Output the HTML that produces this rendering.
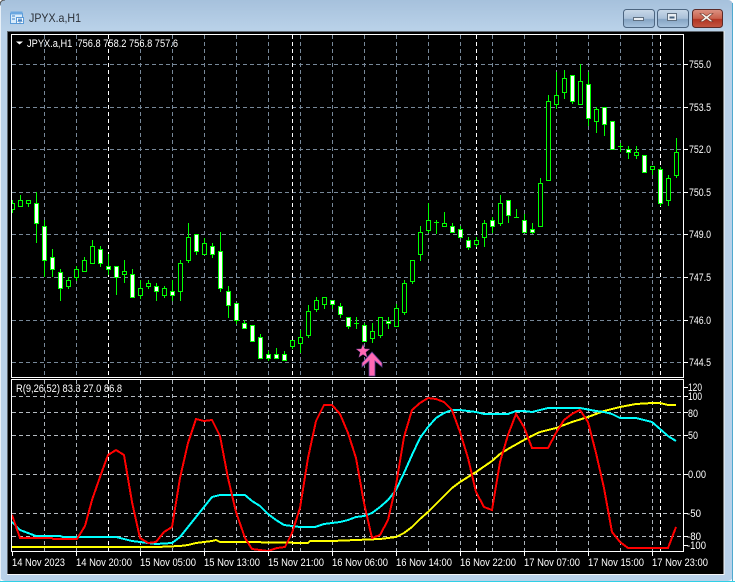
<!DOCTYPE html>
<html><head><meta charset="utf-8"><title>JPYX.a,H1</title>
<style>
html,body{margin:0;padding:0;background:#fff}
body{width:735px;height:582px;overflow:hidden}
svg{display:block}
text{font-family:"Liberation Sans",sans-serif;font-size:11px;fill:#fff}
</style></head><body>
<svg width="735" height="582" viewBox="0 0 735 582" xmlns="http://www.w3.org/2000/svg">
<defs>
<linearGradient id="tb" x1="0" y1="0" x2="0" y2="1"><stop offset="0" stop-color="#a6c1dc"/><stop offset="1" stop-color="#bad2e9"/></linearGradient>
<linearGradient id="bt" x1="0" y1="0" x2="0" y2="1"><stop offset="0" stop-color="#c9d9e9"/><stop offset=".5" stop-color="#a9c0d8"/><stop offset=".55" stop-color="#86a5c4"/><stop offset="1" stop-color="#a8c4de"/></linearGradient>
<linearGradient id="cl" x1="0" y1="0" x2="0" y2="1"><stop offset="0" stop-color="#dc9484"/><stop offset=".5" stop-color="#c9604c"/><stop offset=".55" stop-color="#b23422"/><stop offset="1" stop-color="#c25642"/></linearGradient>
<clipPath id="mc"><rect x="12" y="35" width="671" height="342"/></clipPath>
<clipPath id="ic"><rect x="12" y="380" width="671" height="171"/></clipPath>
</defs>
<rect width="733" height="581" rx="5" fill="#b9d1e9"/>
<rect width="733" height="31" rx="5" fill="url(#tb)"/>
<path d="M0 5Q0 0 5 0" fill="none" stroke="#555" stroke-width="1"/>
<rect x="0" y="581" width="735" height="1" fill="#2fd0e6"/>
<rect x="732" y="3" width="1" height="578" fill="#4fa9cf"/>
<rect x="0" y="6" width="1" height="575" fill="#e8f0f8"/>

<g>
<rect x="10.5" y="13.5" width="12" height="10" fill="#d9ecfb" stroke="#5b9bd8"/>
<rect x="10.5" y="11.5" width="12" height="3" fill="#6aa7e0"/>
<rect x="16.5" y="17.5" width="7" height="6" fill="#fff" stroke="#5b9bd8"/>
<path d="M12 16h3M12 19h3M18 22l1-3 1 3 1-3 1 3" stroke="#3d7fc4" fill="none"/>
</g>
<text x="29" y="22" style="font-size:12px;fill:#2a2f36" textLength="52" lengthAdjust="spacingAndGlyphs">JPYX.a,H1</text>

<rect x="623.5" y="9.5" width="31" height="18" rx="3" fill="url(#bt)" stroke="#4c6580"/>
<rect x="657.5" y="9.5" width="31" height="18" rx="3" fill="url(#bt)" stroke="#4c6580"/>
<rect x="692.5" y="9.5" width="30" height="18" rx="3" fill="url(#cl)" stroke="#5a2a28"/>
<rect x="633.5" y="17.5" width="10" height="3" fill="#e9eef3" stroke="#5f6f80"/>
<rect x="667.5" y="13.5" width="9" height="7" fill="#e9eef3" stroke="#5f6f80"/>
<rect x="669.5" y="16.5" width="5" height="2" fill="#44607c"/>
<path d="M703 13.5l3.5 2.5 3.500-2.500h3l-4.500 4 4.500 4h-3l-3.500-2.500-3.500 2.500h-3l4.500-4-4.500-4z" fill="#f4efe9" stroke="#6e3a30" stroke-width=".6"/>

<rect x="7" y="31" width="717" height="543" fill="#000"/>
<path d="M7.500 574V31.500H724" fill="none" stroke="#5e666e"/>
<path d="M7 574.500H724V31" fill="none" stroke="#f4f6f8"/>

<g shape-rendering="crispEdges" fill="none">
<g clip-path="url(#mc)">
<path stroke="#778899" stroke-dasharray="4 3" d="M12 64.500H683M12 107.500H683M12 149.500H683M12 192.500H683M12 234.500H683M12 277.500H683M12 320.500H683M12 362.500H683"/>
<path stroke="#778899" stroke-dasharray="4 3" d="M44.500 35V377M76.500 35V377M140.500 35V377M172.500 35V377M204.500 35V377M236.500 35V377M268.500 35V377M300.500 35V377M332.500 35V377M364.500 35V377M396.500 35V377M428.500 35V377M460.500 35V377M492.500 35V377M524.500 35V377M556.500 35V377M588.500 35V377M620.500 35V377M652.500 35V377"/>
<path stroke="#fff" stroke-dasharray="4 3" d="M108.500 35V377M292.500 35V377M476.500 35V377M660.500 35V377"/>
<path stroke="#00ff00" d="M12.500 200V213M20.500 195V206M28.500 200V207M36.500 192V243M44.500 220V277M52.500 249V277M60.500 269V301M68.500 277V289M76.500 266V281M84.500 257V271M92.500 240V263M100.500 246V267M108.500 254V275M116.500 266V295M124.500 260V283M132.500 269V297M140.500 280V299M148.500 280V289M156.500 283V301M164.500 286V298M172.500 280V301M180.500 260V301M188.500 223V263M196.500 234V255M204.500 238V254M212.500 243V258M220.500 232V292M228.500 286V318M236.500 303V324M244.500 320V328M252.500 325V341M260.500 334V358M268.500 351V361M276.500 348V358M284.500 351V360M292.500 340V349M300.500 330V353M308.500 305V338M316.500 297V312M324.500 297V309M332.500 300V309M340.500 303V318M348.500 317V329M356.500 317V329M364.500 323V341M372.500 323V343M380.500 317V338M388.500 317V329M396.500 304V326M404.500 280V315M412.500 260V284M420.500 226V261M428.500 203V233M436.500 220V234M444.500 212V226M452.500 223V232M460.500 226V237M468.500 237V250M476.500 237V247M484.500 220V247M492.500 217V233M500.500 195V226M508.500 200V223M516.500 209V218M524.500 214V232M532.500 223V234M540.500 178V226M548.500 95V180M556.500 72V109M564.500 70V99M572.500 75V104M580.500 64V104M588.500 72V126M596.500 107V133M604.500 107V136M612.500 121V149M620.500 143V152M628.500 146V159M636.500 146V159M644.500 155V172M652.500 166V175M660.500 167V206M668.500 175V206M676.500 138V178M354 323.500h5M434 222.500h5M514 217.500h5M618 146.500h5"/>
<path stroke="#00ff00" fill="#000" d="M10.500 203.500h4V209.500h-4zM18.500 200.500h4V206.500h-4zM26.500 200.500h4V203.500h-4zM66.500 280.500h4V286.500h-4zM74.500 269.500h4V277.500h-4zM82.500 260.500h4V271.500h-4zM90.500 246.500h4V263.500h-4zM122.500 271.500h4V274.500h-4zM138.500 288.500h4V295.500h-4zM146.500 283.500h4V286.500h-4zM162.500 288.500h4V295.500h-4zM178.500 263.500h4V291.500h-4zM186.500 237.500h4V260.500h-4zM202.500 243.500h4V254.500h-4zM290.500 340.500h4V346.500h-4zM298.500 337.500h4V343.500h-4zM306.500 311.500h4V335.500h-4zM314.500 300.500h4V309.500h-4zM322.500 297.500h4V304.500h-4zM370.500 331.500h4V338.500h-4zM378.500 317.500h4V335.500h-4zM394.500 308.500h4V326.500h-4zM402.500 283.500h4V312.500h-4zM410.500 260.500h4V281.500h-4zM418.500 232.500h4V254.500h-4zM426.500 220.500h4V230.500h-4zM442.500 223.500h4V226.500h-4zM474.500 240.500h4V244.500h-4zM482.500 223.500h4V237.500h-4zM498.500 203.500h4V223.500h-4zM538.500 183.500h4V226.500h-4zM546.500 101.500h4V180.500h-4zM554.500 95.500h4V104.500h-4zM562.500 78.500h4V92.500h-4zM578.500 81.500h4V104.500h-4zM594.500 109.500h4V121.500h-4zM634.500 152.500h4V155.500h-4zM650.500 166.500h4V169.500h-4zM666.500 178.500h4V200.500h-4zM674.500 152.500h4V175.500h-4z"/>
<path stroke="#00ff00" fill="#fff" d="M34.500 203.500h4V223.500h-4zM42.500 226.500h4V260.500h-4zM50.500 257.500h4V269.500h-4zM58.500 272.500h4V288.500h-4zM98.500 249.500h4V263.500h-4zM106.500 266.500h4V269.500h-4zM114.500 266.500h4V277.500h-4zM130.500 274.500h4V297.500h-4zM154.500 286.500h4V291.500h-4zM170.500 291.500h4V295.500h-4zM194.500 234.500h4V251.500h-4zM210.500 246.500h4V254.500h-4zM218.500 251.500h4V288.500h-4zM226.500 291.500h4V305.500h-4zM234.500 303.500h4V320.500h-4zM242.500 323.500h4V328.500h-4zM250.500 325.500h4V341.500h-4zM258.500 337.500h4V358.500h-4zM266.500 354.500h4V358.500h-4zM274.500 354.500h4V358.500h-4zM282.500 354.500h4V360.500h-4zM330.500 300.500h4V304.500h-4zM338.500 306.500h4V314.500h-4zM346.500 317.500h4V326.500h-4zM362.500 325.500h4V341.500h-4zM386.500 321.500h4V323.500h-4zM450.500 226.500h4V232.500h-4zM458.500 229.500h4V237.500h-4zM466.500 240.500h4V247.500h-4zM490.500 220.500h4V226.500h-4zM506.500 200.500h4V215.500h-4zM522.500 220.500h4V232.500h-4zM530.500 229.500h4V232.500h-4zM570.500 75.500h4V101.500h-4zM586.500 84.500h4V118.500h-4zM602.500 107.500h4V124.500h-4zM610.500 121.500h4V149.500h-4zM626.500 149.500h4V152.500h-4zM642.500 155.500h4V172.500h-4zM658.500 169.500h4V203.500h-4z"/>
</g>
<path stroke="#fff" d="M11.500 34.500H683.500V377.500H11.500Z"/>
<path stroke="#fff" d="M683 64.500h5M683 107.500h5M683 149.500h5M683 192.500h5M683 234.500h5M683 277.500h5M683 320.500h5M683 362.500h5"/>

<g clip-path="url(#ic)">
<path stroke="#b4bac0" stroke-dasharray="4 3" d="M12 396.500H683M12 412.500H683M12 435.500H683M12 474.500H683M12 513.500H683M12 536.500H683"/>
<path stroke="#aab2ba" stroke-dasharray="4 3" d="M44.500 380V551M76.500 380V551M140.500 380V551M172.500 380V551M204.500 380V551M236.500 380V551M268.500 380V551M300.500 380V551M332.500 380V551M364.500 380V551M396.500 380V551M428.500 380V551M460.500 380V551M492.500 380V551M524.500 380V551M556.500 380V551M588.500 380V551M620.500 380V551M652.500 380V551"/>
<path stroke="#fff" stroke-dasharray="4 3" d="M108.500 380V551M292.500 380V551M476.500 380V551M660.500 380V551"/>
<polyline stroke="#ffff00" stroke-width="2" points="12,547 157,547 180,546 188,545 196,543 212,541 216,540 220,542 245,542 308,543 310,541 332,541 356,540 380,539 396,537 404,533 412,527 420,519 428,512 436,504 444,496 452,488 460,482 468,477 476,472 492,461 500,454 508,449 524,440 540,432 556,428 572,422 588,417 604,411 620,407 636,404 652,403 660,403 668,405 676,405"/>
<polyline stroke="#00ffff" stroke-width="2" points="12,522 20,530 28,533 36,536 60,536 63,537 116,537 124,539 132,541 148,543 156,544 172,543 180,537 188,527 196,517 204,507 212,497 220,495 245,495 252,501 260,506 268,514 276,520 284,525 292,526 300,527 315,527 324,524 340,522 348,520 356,517 364,516 372,513 380,507 388,500 396,490 404,473 412,455 420,438 428,427 436,418 444,413 452,410 460,410 476,412 484,414 508,414 516,411 524,411 532,412 540,410 548,408 580,408 596,411 604,412 612,414 620,418 636,418 644,420 652,422 660,429 668,436 676,441"/>
<polyline stroke="#ff0000" stroke-width="2" points="12,515 20,538 52,538 53,539 77,539 85,526 92,500 100,477 108,455 116,450 124,455 132,502 140,538 148,543 156,542 164,532 172,527 180,478 188,443 196,419 204,421 212,420 220,436 228,478 236,512 245,538 252,549 268,551 277,548 285,547 292,533 300,508 308,458 316,421 324,405 332,405 340,414 348,433 356,458 364,503 372,538 380,535 388,520 396,485 404,437 412,410 420,403 428,398 436,399 444,402 452,410 460,432 468,458 476,492 484,507 492,510 500,462 508,435 516,414 524,427 532,448 548,448 556,433 564,420 572,414 580,410 588,422 596,453 604,488 612,532 620,542 628,548 668,548 676,527"/>
</g>
<path stroke="#fff" d="M11.500 379.500H683.500V551.500H11.500Z"/>
<path stroke="#fff" d="M683 396.500h5M683 412.500h5M683 435.500h5M683 474.500h5M683 513.500h5M683 536.500h5M683 545.500h5M683 387.500h5"/>
<path stroke="#fff" d="M12.500 552V556M76.500 552V556M140.500 552V556M204.500 552V556M268.500 552V556M332.500 552V556M396.500 552V556M460.500 552V556M524.500 552V556M588.500 552V556M652.500 552V556"/>
</g>

<path d="M16 41.500h7l-3.500 3z" fill="#fff"/>
<text x="27" y="47" textLength="151" lengthAdjust="spacingAndGlyphs" xml:space="preserve">JPYX.a,H1  756.8 758.2 756.8 757.6</text>
<text x="16" y="392" textLength="106" lengthAdjust="spacingAndGlyphs">R(9,26,52) 83.3 27.0 86.8</text>

<g>
<text x="689" y="68" textLength="22" lengthAdjust="spacingAndGlyphs">755.0</text>
<text x="689" y="111" textLength="22" lengthAdjust="spacingAndGlyphs">753.5</text>
<text x="689" y="153" textLength="22" lengthAdjust="spacingAndGlyphs">752.0</text>
<text x="689" y="196" textLength="22" lengthAdjust="spacingAndGlyphs">750.5</text>
<text x="689" y="238" textLength="22" lengthAdjust="spacingAndGlyphs">749.0</text>
<text x="689" y="281" textLength="22" lengthAdjust="spacingAndGlyphs">747.5</text>
<text x="689" y="324" textLength="22" lengthAdjust="spacingAndGlyphs">746.0</text>
<text x="689" y="366" textLength="22" lengthAdjust="spacingAndGlyphs">744.5</text>
<text x="688" y="391" textLength="14" lengthAdjust="spacingAndGlyphs">120</text>
<text x="688" y="400" textLength="14" lengthAdjust="spacingAndGlyphs">100</text>
<text x="688" y="417" textLength="10" lengthAdjust="spacingAndGlyphs">80</text>
<text x="688" y="439" textLength="10" lengthAdjust="spacingAndGlyphs">50</text>
<text x="688" y="478" textLength="18" lengthAdjust="spacingAndGlyphs">0.00</text>
<text x="687" y="517" textLength="14" lengthAdjust="spacingAndGlyphs">-50</text>
<text x="687" y="540" textLength="14" lengthAdjust="spacingAndGlyphs">-80</text>
<text x="687" y="549" textLength="19" lengthAdjust="spacingAndGlyphs">-100</text>
</g>
<g>
<text x="12" y="566" textLength="53" lengthAdjust="spacingAndGlyphs">14 Nov 2023</text>
<text x="76" y="566" textLength="56" lengthAdjust="spacingAndGlyphs">14 Nov 20:00</text>
<text x="140" y="566" textLength="56" lengthAdjust="spacingAndGlyphs">15 Nov 05:00</text>
<text x="204" y="566" textLength="56" lengthAdjust="spacingAndGlyphs">15 Nov 13:00</text>
<text x="268" y="566" textLength="56" lengthAdjust="spacingAndGlyphs">15 Nov 21:00</text>
<text x="332" y="566" textLength="56" lengthAdjust="spacingAndGlyphs">16 Nov 06:00</text>
<text x="396" y="566" textLength="56" lengthAdjust="spacingAndGlyphs">16 Nov 14:00</text>
<text x="460" y="566" textLength="56" lengthAdjust="spacingAndGlyphs">16 Nov 22:00</text>
<text x="524" y="566" textLength="56" lengthAdjust="spacingAndGlyphs">17 Nov 07:00</text>
<text x="588" y="566" textLength="56" lengthAdjust="spacingAndGlyphs">17 Nov 15:00</text>
<text x="652" y="566" textLength="56" lengthAdjust="spacingAndGlyphs">17 Nov 23:00</text>
</g>

<path d="M363 344l1.800 4.800 5.200.2-4.100 3.200 1.400 5.300-4.300-3-4.300 3 1.400-5.300-4.100-3.200 5.200-.2z" fill="#ff69b4" stroke="#3a2a70" stroke-width=".4"/>
<path d="M372 352l10 11v4l-7-6v15h-6v-15l-7 6v-4z" fill="#ff69b4" stroke="#5a3a90" stroke-width=".8"/>
</svg>
</body></html>
